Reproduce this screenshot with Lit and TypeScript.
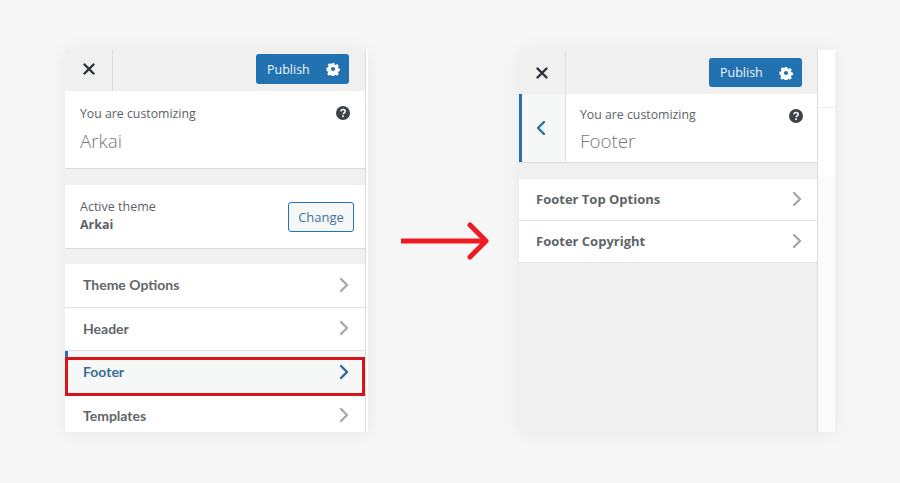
import { LitElement, css, html, svg } from "lit";
import { customElement, property } from "lit/decorators.js";

const chevron = (color: string) => html`<svg class="chev" width="10" height="16" viewBox="0 0 10 16">
  <path d="M2 2l6 6-6 6" fill="none" stroke=${color} stroke-width="2.4" stroke-linecap="round" stroke-linejoin="round" />
</svg>`;

const gear = svg`<path fill="#fff" fill-rule="evenodd" d="M5.6 0h2.8l.4 1.9 1.1.5 1.7-1 2 2-1 1.7.5 1.1 1.9.4v2.8l-1.9.4-.5 1.1 1 1.7-2 2-1.7-1-1.1.5-.4 1.9H5.6l-.4-1.9-1.1-.5-1.7 1-2-2 1-1.7-.5-1.1L-.5 8.4V5.6l1.9-.4.5-1.1-1-1.7 2-2 1.7 1 1.1-.5zM7 4.6a2.4 2.4 0 1 0 0 4.8 2.4 2.4 0 0 0 0-4.8z" />`;

@customElement("customizer-top")
class CustomizerTop extends LitElement {
  static styles = css`
    :host {
      display: flex;
      flex: none;
      align-items: center;
      justify-content: space-between;
      background: #f0f0f1;
      box-sizing: border-box;
    }
    .close {
      width: var(--close-width, 48px);
      height: 100%;
      box-sizing: border-box;
      border-right: 1px solid #dcdcde;
      display: flex;
      align-items: center;
      justify-content: center;
    }
    .close svg {
      margin-bottom: var(--top-nudge, 0);
    }
    .publish {
      width: 93px;
      height: var(--publish-height, 30px);
      margin-right: var(--publish-right, 15px);
      margin-bottom: var(--top-nudge, 0);
      box-sizing: border-box;
      border-radius: 3px;
      background: #2271b1;
      color: #f0f6fc;
      font: 12.5px "Open Sans", sans-serif;
      display: flex;
      align-items: center;
      justify-content: space-between;
      padding: 0 9px 0 11px;
    }
  `;

  render() {
    return html`
      <div class="close">
        <svg width="12" height="12" viewBox="0 0 12 12">
          <path d="M1.5 1.5l9 9M10.5 1.5l-9 9" stroke="#2c3338" stroke-width="2.4" stroke-linecap="round" />
        </svg>
      </div>
      <div class="publish">
        <span>Publish</span>
        <svg width="14" height="14" viewBox="-1 -1 16 16">${gear}</svg>
      </div>
    `;
  }
}

@customElement("customizer-info")
class CustomizerInfo extends LitElement {
  @property() title = "";

  static styles = css`
    :host {
      display: block;
      flex: 1;
      position: relative;
      color: #5c6166;
      font-family: "Open Sans", sans-serif;
    }
    .small {
      font-size: 12.3px;
      line-height: 18px;
    }
    .big {
      font-size: 18.8px;
      font-weight: 300;
      line-height: 28px;
      margin-top: var(--big-gap, 4px);
      color: #72777c;
    }
    svg {
      position: absolute;
      top: 15px;
      right: var(--help-right, 15px);
    }
  `;

  render() {
    return html`
      <div class="small">You are customizing</div>
      <div class="big">${this.title}</div>
      <svg width="14" height="14" viewBox="0 0 14 14">
        <circle cx="7" cy="7" r="7" fill="#3c434a" />
        <path d="M4.9 5.4c.1-1.2 1-1.9 2.2-1.9s2.1.7 2.1 1.8c0 1.6-2 1.6-2 3" fill="none" stroke="#fff" stroke-width="1.6" />
        <rect x="6.2" y="9.4" width="1.7" height="1.7" fill="#fff" />
      </svg>
    `;
  }
}

@customElement("app-root")
class AppRoot extends LitElement {
  static styles = css`
    :host {
      display: block;
      height: 483px;
      background: #f7f7f7;
      overflow: hidden;
    }
    .page {
      display: flex;
      align-items: flex-start;
      padding: 50px 0 0 65px;
    }
    .card {
      display: flex;
      height: 382px;
      background: #fff;
      box-shadow: 0 1px 18px rgba(0, 0, 0, 0.07);
    }
    .side {
      display: flex;
      flex-direction: column;
      background: #f0f0f1;
      border-right: 1px solid #dcdcde;
      overflow: hidden;
    }
    .stub {
      display: flex;
      flex-direction: column;
      background: #fff;
    }
    .stub-top {
      flex: none;
      border-bottom: 1px solid #eeeeee;
    }
    .stub-mid {
      flex: none;
      height: 68px;
    }
    .stub-low {
      flex: 1;
      background: #fbfbfb;
    }
    .left .side {
      width: 300px;
    }
    .left .stub {
      width: 2px;
    }
    .left .stub-top {
      height: 55px;
    }
    .right .side {
      width: 298px;
    }
    .right .stub {
      width: 17px;
    }
    .right .stub-top {
      height: 57px;
    }
    .arrow {
      margin: 171px 30px 0 33px;
      flex: none;
    }
    .left customizer-top {
      height: 41px;
      --top-nudge: 3px;
      --publish-right: 16px;
    }
    .right customizer-top {
      height: 44px;
      padding-top: 1px;
      --publish-height: 29px;
      --close-width: 47px;
    }
    .panel {
      display: flex;
      background: #fff;
      border-bottom: 1px solid #dcdcde;
      flex: none;
    }
    .left .panel {
      height: 77px;
      margin-bottom: 16px;
    }
    .right .panel {
      height: 68px;
      margin-bottom: 16px;
    }
    .left customizer-info {
      padding: 14px 15px 0;
    }
    .right customizer-info {
      padding: 12px 15px 0 14px;
      --big-gap: 3px;
      --help-right: 14px;
    }
    .back {
      width: 47px;
      box-sizing: border-box;
      border-left: 3px solid #2271b1;
      border-right: 1px solid #dcdcde;
      background: #f6f7f7;
      display: flex;
      align-items: center;
      justify-content: center;
    }
    .back svg {
      margin-right: 5px;
    }
    .theme {
      height: 64px;
      margin-bottom: 15px;
      box-sizing: border-box;
      background: #fff;
      border-bottom: 1px solid #dcdcde;
      display: flex;
      align-items: center;
      justify-content: space-between;
      padding: 0 11px 0 15px;
      font: 12.5px/18px "Open Sans", sans-serif;
      color: #5c6166;
      flex: none;
    }
    .theme-name {
      padding-bottom: 1px;
    }
    .theme b {
      display: block;
      font-weight: 700;
    }
    .change {
      width: 66px;
      height: 30px;
      margin-top: 1px;
      box-sizing: border-box;
      border: 1px solid #2271b1;
      border-radius: 3px;
      background: #f6f7f7;
      color: #3f739f;
      font-size: 13px;
      display: flex;
      align-items: center;
      justify-content: center;
    }
    .row {
      position: relative;
      flex: none;
      box-sizing: border-box;
      background: #fff;
      border-bottom: 1px solid #e2e2e4;
      display: flex;
      align-items: center;
      justify-content: space-between;
      color: #5f6469;
    }
    .left .row {
      height: 43.5px;
      padding: 0 16px 1px 18px;
      font: 700 14px "Lato", sans-serif;
    }
    .right .row {
      height: 42px;
      padding: 0 15px 1px 17px;
      font: 700 13px "Open Sans", sans-serif;
    }
    .right .row:first-of-type {
      border-top: 1px solid #e6e6e6;
    }
    .left .row.active {
      z-index: 1;
      background: #f6f7f7;
      color: #3a6c97;
      border-left: 3px solid #2271b1;
      padding-left: 15px;
    }
    .highlight {
      position: absolute;
      left: -3px;
      right: 0;
      top: 6px;
      height: 39px;
      box-sizing: border-box;
      border: 3px solid #d7141a;
    }
  `;

  render() {
    return html`
      <div class="page">
        <div class="card left">
          <div class="side">
            <customizer-top></customizer-top>
            <div class="panel"><customizer-info title="Arkai"></customizer-info></div>
            <div class="theme">
              <div class="theme-name">Active theme<b>Arkai</b></div>
              <div class="change">Change</div>
            </div>
            <div class="row">Theme Options ${chevron("#a7aaad")}</div>
            <div class="row">Header ${chevron("#a7aaad")}</div>
            <div class="row active">
              Footer ${chevron("#2c6a9e")}
              <div class="highlight"></div>
            </div>
            <div class="row">Templates ${chevron("#a7aaad")}</div>
          </div>
          <div class="stub"><div class="stub-top"></div></div>
        </div>

        <svg class="arrow" width="88" height="40" viewBox="0 0 88 40">
          <path d="M0 20h84" stroke="#ee1c22" stroke-width="5" />
          <path d="M69 4l16 16-16 16" fill="none" stroke="#ee1c22" stroke-width="5" stroke-linecap="round" stroke-linejoin="round" />
        </svg>

        <div class="card right">
          <div class="side">
            <customizer-top></customizer-top>
            <div class="panel">
              <div class="back">
                <svg width="10" height="16" viewBox="0 0 10 16">
                  <path d="M8 2L2 8l6 6" fill="none" stroke="#2271b1" stroke-width="2.4" stroke-linecap="round" stroke-linejoin="round" />
                </svg>
              </div>
              <customizer-info title="Footer"></customizer-info>
            </div>
            <div class="row">Footer Top Options ${chevron("#a7aaad")}</div>
            <div class="row">Footer Copyright ${chevron("#a7aaad")}</div>
          </div>
          <div class="stub">
            <div class="stub-top"></div>
            <div class="stub-mid"></div>
            <div class="stub-low"></div>
          </div>
        </div>
      </div>
    `;
  }
}
